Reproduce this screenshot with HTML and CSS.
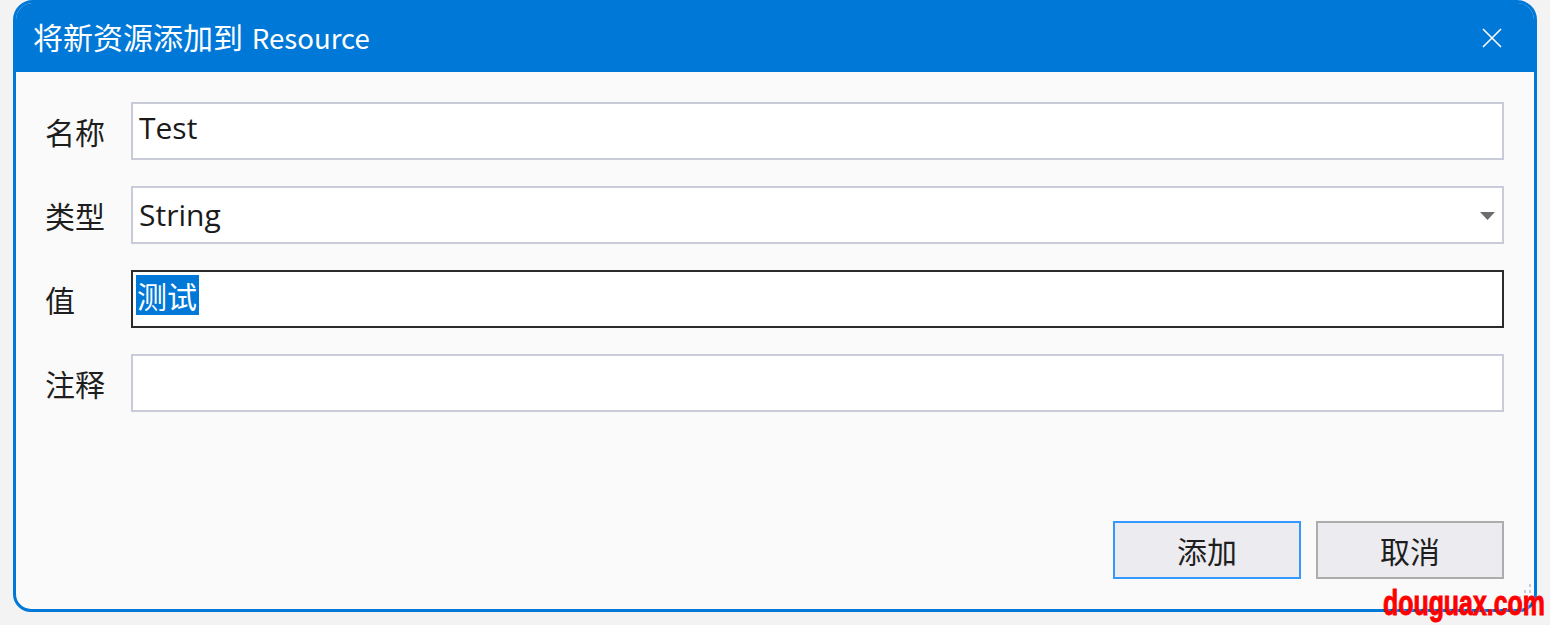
FILE: index.html
```html
<!DOCTYPE html>
<html lang="zh-CN">
<head>
<meta charset="utf-8">
<title>将新资源添加到 Resource</title>
<link rel="stylesheet" href="styles.css">
</head>
<body>
<div class="dialog">
  <div class="titlebar">
    <span class="title">将新资源添加到 <span class="title-latin">Resource</span></span>
    <svg class="close" width="20" height="20" viewBox="0 0 20 20"><path d="M1 1 L19 19 M19 1 L1 19" stroke="#ffffff" stroke-width="1.6" fill="none"/></svg>
  </div>
  <div class="body">
    <div class="rows">
      <div class="row">
        <span class="label">名称</span>
        <div class="field text-field">Test</div>
      </div>
      <div class="row">
        <span class="label">类型</span>
        <div class="field combo"><span class="combo-text">String</span><svg class="arrow" width="15" height="8" viewBox="0 0 15 8"><path d="M0 0 H15 L7.5 8 Z" fill="#6d6d6d"/></svg></div>
      </div>
      <div class="row">
        <span class="label">值</span>
        <div class="field value-field focused"><span class="selection">测试</span></div>
      </div>
      <div class="row">
        <span class="label">注释</span>
        <div class="field text-field"></div>
      </div>
    </div>
    <div class="buttons">
      <button class="btn btn-default">添加</button>
      <button class="btn">取消</button>
    </div>
    <svg class="grip" width="18" height="24" viewBox="0 0 18 24">
      <g fill="#c3cbd9">
        <rect x="14" y="1" width="2" height="3"/>
        <rect x="14" y="7" width="2" height="3"/>
        <rect x="9" y="7" width="2" height="3"/>
        <rect x="14" y="13" width="2" height="3"/>
        <rect x="9" y="13" width="2" height="3"/>
        <rect x="4" y="13" width="2" height="3"/>
        <rect x="14" y="19" width="2" height="3"/>
        <rect x="9" y="19" width="2" height="3"/>
        <rect x="4" y="19" width="2" height="3"/>
      </g>
    </svg>
  </div>
</div>
<div class="watermark">douguax.com</div>
</body>
</html>
```
FILE: styles.css
```css
html, body {
  margin: 0;
  padding: 0;
  background: #f3f3f3;
}

body {
  width: 1550px;
  height: 625px;
  overflow: hidden;
  position: relative;
  font-family: "Open Sans", "Noto Sans CJK SC", sans-serif;
  color: #1b1b1b;
}

.dialog {
  margin-left: 13px;
  width: 1524px;
  height: 612px;
  box-sizing: border-box;
  border: 3px solid #0078d7;
  border-radius: 20px 20px 18px 18px;
  background: #fafafa;
  overflow: hidden;
  display: flex;
  flex-direction: column;
}

.titlebar {
  height: 69px;
  background: #0078d7;
  display: flex;
  align-items: center;
  padding: 0 32px 0 17px;
  flex: none;
}

.title {
  flex: 1;
  color: #ffffff;
  font-family: "Noto Sans CJK SC", sans-serif;
  font-size: 30px;
  line-height: 40px;
  margin-top: -2px;
}

.title-latin {
  font-size: 27.6px;
  margin-left: 2px;
}

.close {
  display: block;
}

.body {
  flex: 1;
  position: relative;
  display: flex;
  flex-direction: column;
  justify-content: space-between;
  padding: 30px 30px 30px 29px;
}

.rows {
  display: flex;
  flex-direction: column;
  gap: 26px;
}

.row {
  display: flex;
  align-items: center;
}

.label {
  width: 86px;
  flex: none;
  font-family: "Noto Sans CJK SC", sans-serif;
  font-size: 30px;
  line-height: 40px;
  color: #1e1e1e;
}

.field {
  flex: 1;
  height: 58px;
  box-sizing: border-box;
  border: 2px solid #cacbd8;
  background: #ffffff;
  font-size: 30px;
  line-height: 41px;
  color: #1a1a1a;
}

.text-field {
  padding: 3px 6px 0 6px;
}

.combo {
  display: flex;
  align-items: flex-start;
  padding: 6px 7px 0 6px;
}

.combo-text {
  flex: 1;
}

.arrow {
  display: block;
  margin-top: 18px;
}

.value-field {
  padding: 3px 3px 0 3px;
}

.focused {
  border-color: #2b2b2b;
}

.selection {
  display: inline-block;
  height: 40px;
  line-height: 40px;
  padding: 0 2px 0 1px;
  background: #0078d7;
  color: #ffffff;
  font-family: "Noto Sans CJK SC", sans-serif;
}

.buttons {
  display: flex;
  justify-content: flex-end;
  gap: 15px;
}

.btn {
  width: 188px;
  height: 58px;
  box-sizing: border-box;
  border: 2px solid #adadad;
  background: #ecebf0;
  font-family: "Noto Sans CJK SC", sans-serif;
  font-size: 30px;
  color: #1e1e1e;
  padding: 0;
  margin: 0;
}

.btn-default {
  border-color: #3399ff;
}

.grip {
  position: absolute;
  right: 1px;
  bottom: 2px;
}

.watermark {
  position: absolute;
  left: 1383px;
  top: 584px;
  font-family: "Liberation Sans", sans-serif;
  font-weight: bold;
  font-size: 30px;
  line-height: 34px;
  color: #ff0000;
  -webkit-text-stroke: 0.8px #ff0000;
  transform: scale(0.83, 1.16);
  transform-origin: left top;
  white-space: nowrap;
}
```
